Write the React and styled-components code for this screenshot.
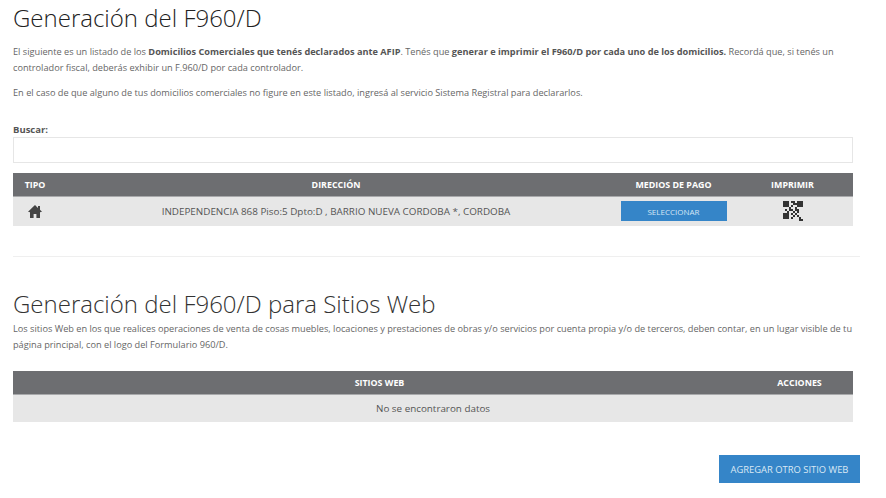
import React from 'react';
import styled, { createGlobalStyle } from 'styled-components';

const GlobalStyle = createGlobalStyle`
  html, body {
    margin: 0;
    padding: 0;
    background: #fff;
    font-family: "Open Sans", "Liberation Sans", sans-serif;
    color: #666;
  }
  * {
    box-sizing: border-box;
  }
`;

const Page = styled.div`
  width: 886px;
  height: 498px;
  overflow: hidden;
  padding: 2px 26px 0 13px;
`;

const Title = styled.h1`
  margin: 0;
  font-size: 24px;
  line-height: 32px;
  font-weight: 300;
  color: #222;
`;

const SiteTitle = styled(Title)`
  margin-top: 31px;
  color: #333;
`;

const Text = styled.p`
  margin: ${(p) => p.$top || 0}px 0 0;
  font-size: 9.2px;
  line-height: 16px;
  color: #666;

  strong {
    font-weight: 700;
    color: #555;
  }
`;

const SearchLabel = styled.label`
  display: block;
  margin-top: 22px;
  font-size: 9.5px;
  line-height: 14px;
  font-weight: 700;
  color: #555;
`;

const SearchInput = styled.input`
  display: block;
  width: 840px;
  height: 26px;
  margin-top: 0;
  border: 1px solid #e6e6e6;
  background: #fff;
`;

const Table = styled.table`
  width: 840px;
  margin-top: ${(p) => p.$top}px;
  border-collapse: collapse;
  table-layout: fixed;
  font-size: 9.85px;
`;

const HeadCell = styled.th`
  height: 23px;
  padding: 0;
  background: #6d6e71;
  border-bottom: 1px solid #a8a9ab;
  color: #fff;
  font-size: 8.9px;
  font-weight: 700;
  text-align: center;
`;

const Cell = styled.td`
  height: ${(p) => p.$height}px;
  padding: 0;
  background: #e7e7e7;
  color: #555;
  text-align: center;
  vertical-align: middle;
`;

const HomeIcon = styled.svg`
  display: block;
  width: 14px;
  height: 13px;
  margin: 0 auto;
  fill: #444;
`;

const SelectButton = styled.button`
  display: block;
  width: 106px;
  height: 20px;
  margin: 0 auto;
  padding: 0;
  border: 0;
  background: #3585c8;
  color: #d5e6f4;
  font-family: inherit;
  font-size: 8px;
`;

const QrIcon = styled.svg`
  display: block;
  width: 20px;
  height: 20px;
  margin: 0 auto;
  fill: #333;
`;

const Divider = styled.hr`
  width: 847px;
  height: 1px;
  margin: 30px 0 0;
  border: 0;
  background: #efefef;
`;

const Actions = styled.div`
  display: flex;
  justify-content: flex-end;
  width: 847px;
  margin-top: 33px;
`;

const AddButton = styled.button`
  width: 141px;
  height: 28px;
  padding: 0;
  border: 0;
  background: #3585c8;
  color: #dbe9f5;
  font-family: inherit;
  font-size: 9.4px;
`;

const qrCells = [
  '1110110111',
  '1110011111',
  '1110100111',
  '0001001000',
  '0101101100',
  '0010010100',
  '1110101000',
  '1110010100',
  '1110100010',
  '0000000011',
];

const QrCode = () => (
  <QrIcon viewBox="0 0 10 10">
    {qrCells.map((row, y) =>
      row.split('').map((cell, x) =>
        cell === '1' ? <rect key={`${x}-${y}`} x={x} y={y} width="1" height="1" /> : null
      )
    )}
  </QrIcon>
);

const House = () => (
  <HomeIcon viewBox="0 0 14 13">
    <path d="M7 0 L10 2.9 V1 H12 V4.8 L14 6.8 L12 7.2 V13 H8.4 V9 H5.6 V13 H2 V7.2 L0 6.8 Z" />
  </HomeIcon>
);

const App = () => (
  <>
    <GlobalStyle />
    <Page>
      <Title>Generación del F960/D</Title>
      <Text $top={10}>
        El siguiente es un listado de los <strong>Domicilios Comerciales que tenés declarados ante AFIP</strong>. Tenés que{' '}
        <strong>generar e imprimir el F960/D por cada uno de los domicilios.</strong> Recordá que, si tenés un controlador
        fiscal, deberás exhibir un F.960/D por cada controlador.
      </Text>
      <Text $top={9}>
        En el caso de que alguno de tus domicilios comerciales no figure en este listado, ingresá al servicio Sistema Registral
        para declararlos.
      </Text>

      <SearchLabel>Buscar:</SearchLabel>
      <SearchInput type="text" />

      <Table $top={10}>
        <colgroup>
          <col width="44" />
          <col width="558" />
          <col width="117" />
          <col width="121" />
        </colgroup>
        <thead>
          <tr>
            <HeadCell>TIPO</HeadCell>
            <HeadCell>DIRECCIÓN</HeadCell>
            <HeadCell>MEDIOS DE PAGO</HeadCell>
            <HeadCell>IMPRIMIR</HeadCell>
          </tr>
        </thead>
        <tbody>
          <tr>
            <Cell $height={30}><House /></Cell>
            <Cell $height={30}>INDEPENDENCIA 868 Piso:5 Dpto:D , BARRIO NUEVA CORDOBA *, CORDOBA</Cell>
            <Cell $height={30}><SelectButton>SELECCIONAR</SelectButton></Cell>
            <Cell $height={30}><QrCode /></Cell>
          </tr>
        </tbody>
      </Table>

      <Divider />

      <SiteTitle>Generación del F960/D para Sitios Web</SiteTitle>
      <Text $top={1}>
        Los sitios Web en los que realices operaciones de venta de cosas muebles, locaciones y prestaciones de obras y/o
        servicios por cuenta propia y/o de terceros, deben contar, en un lugar visible de tu página principal, con el logo del
        Formulario 960/D.
      </Text>

      <Table $top={18}>
        <colgroup>
          <col width="733" />
          <col width="107" />
        </colgroup>
        <thead>
          <tr>
            <HeadCell>SITIOS WEB</HeadCell>
            <HeadCell>ACCIONES</HeadCell>
          </tr>
        </thead>
        <tbody>
          <tr>
            <Cell $height={28} colSpan={2}>No se encontraron datos</Cell>
          </tr>
        </tbody>
      </Table>

      <Actions>
        <AddButton>AGREGAR OTRO SITIO WEB</AddButton>
      </Actions>
    </Page>
  </>
);

export default App;
